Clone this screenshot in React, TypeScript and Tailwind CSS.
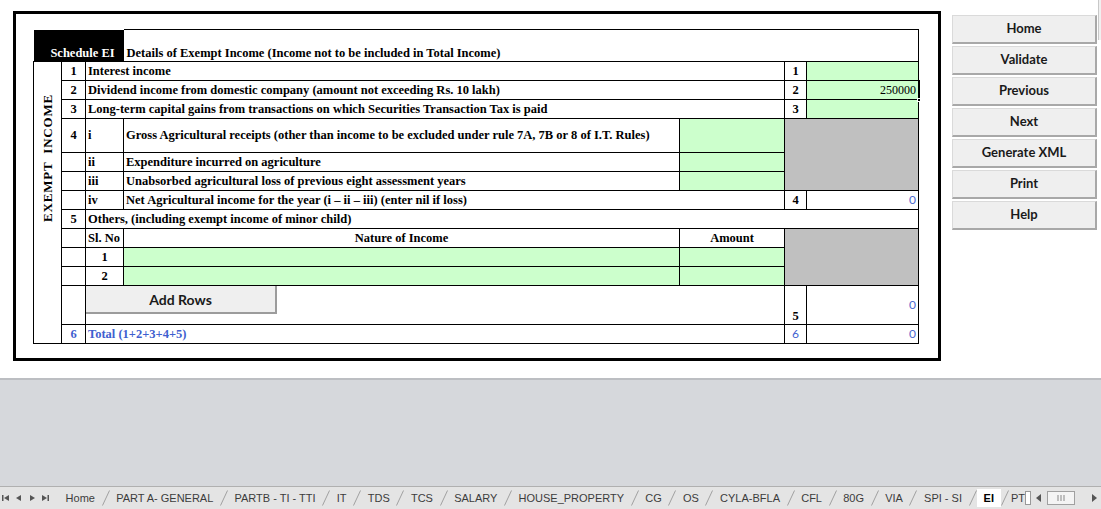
const sideButtons = ["Home", "Validate", "Previous", "Next", "Generate XML", "Print", "Help"];

const sheetTabs = [
  "Home",
  "PART A- GENERAL",
  "PARTB - TI - TTI",
  "IT",
  "TDS",
  "TCS",
  "SALARY",
  "HOUSE_PROPERTY",
  "CG",
  "OS",
  "CYLA-BFLA",
  "CFL",
  "80G",
  "VIA",
  "SPI - SI",
];

const cell = "border border-black px-[2px] py-0 leading-none";
const num = "border border-black p-0 text-center leading-none";
const green = "border border-black bg-[#ccffcc] p-0";
const gray = "border border-black bg-[#c0c0c0] p-0";
const blueZero = "border border-black p-0 pr-[2px] text-right font-['Lato',sans-serif] font-normal text-[12px] text-[#4b6bd0] leading-none";

const Slash = () => (
  <svg width="8" height="16" viewBox="0 0 8 16" className="shrink-0">
    <path d="M0.5 15.5 L7.5 0.5" stroke="#a0a0a0" strokeWidth="1" fill="none" />
  </svg>
);

const SheetNav = () => (
  <div className="flex items-center gap-[5px] pl-[2px] pr-[3px]">
    <svg width="8" height="8" viewBox="0 0 8 8">
      <rect x="0" y="1" width="1.5" height="6" fill="#555" />
      <path d="M7 1 L2 4 L7 7 Z" fill="#555" />
    </svg>
    <svg width="8" height="8" viewBox="0 0 8 8">
      <path d="M6 1 L1 4 L6 7 Z" fill="#555" />
    </svg>
    <svg width="8" height="8" viewBox="0 0 8 8">
      <path d="M2 1 L7 4 L2 7 Z" fill="#555" />
    </svg>
    <svg width="8" height="8" viewBox="0 0 8 8">
      <path d="M1 1 L6 4 L1 7 Z" fill="#555" />
      <rect x="6.5" y="1" width="1.5" height="6" fill="#555" />
    </svg>
  </div>
);

const ScheduleEI = () => (
  <table className="table-fixed border-collapse w-[885px] font-['Liberation_Serif',serif] font-bold text-[12.5px] text-black">
    <colgroup>
      <col className="w-[28px]" />
      <col className="w-[24px]" />
      <col className="w-[38px]" />
      <col className="w-[556px]" />
      <col className="w-[105px]" />
      <col className="w-[22px]" />
      <col className="w-[112px]" />
    </colgroup>
    <tbody>
      <tr className="h-[32px]">
        <td colSpan={3} className="bg-black text-white text-center align-bottom pb-[2px] pl-[8px] leading-none">
          Schedule EI
        </td>
        <td colSpan={4} className="border-t border-r border-b border-black align-bottom pb-[2px] px-[3px] leading-none">
          Details of Exempt Income (Income not to be included in Total Income)
        </td>
      </tr>
      <tr className="h-[19px]">
        <td rowSpan={13} className="border border-black p-0 align-top">
          <div className="h-[192px] flex items-center justify-center">
            <span className="[writing-mode:vertical-rl] rotate-180 whitespace-pre text-[13px] tracking-[0.8px]">EXEMPT  INCOME</span>
          </div>
        </td>
        <td className={num}>1</td>
        <td colSpan={3} className={cell}>Interest income</td>
        <td className={num}>1</td>
        <td className={green} />
      </tr>
      <tr className="h-[19px]">
        <td className={num}>2</td>
        <td colSpan={3} className={cell}>Dividend income from domestic company (amount not exceeding Rs. 10 lakh)</td>
        <td className={num}>2</td>
        <td className="border border-black bg-[#ccffcc] p-0 pr-[2px] text-right font-normal text-[12px] relative">
          250000
          <span className="absolute right-[-2px] top-[-1px] bottom-[-1px] w-[2px] bg-black" />
          <span className="absolute right-[-3px] bottom-[-3px] w-[4px] h-[4px] bg-black border border-white" />
        </td>
      </tr>
      <tr className="h-[19px]">
        <td className={num}>3</td>
        <td colSpan={3} className={cell}>Long-term capital gains from transactions on which Securities Transaction Tax is paid</td>
        <td className={num}>3</td>
        <td className={green} />
      </tr>
      <tr className="h-[34px]">
        <td className={num}>4</td>
        <td className={cell}>i</td>
        <td className={cell}>Gross Agricultural receipts (other than income to be excluded under rule 7A, 7B or 8 of I.T. Rules)</td>
        <td className={green} />
        <td colSpan={2} rowSpan={3} className={gray} />
      </tr>
      <tr className="h-[19px]">
        <td className={num} />
        <td className={cell}>ii</td>
        <td className={cell}>Expenditure incurred on agriculture</td>
        <td className={green} />
      </tr>
      <tr className="h-[19px]">
        <td className={num} />
        <td className={cell}>iii</td>
        <td className={cell}>Unabsorbed agricultural loss of previous eight assessment years</td>
        <td className={green} />
      </tr>
      <tr className="h-[19px]">
        <td className={num} />
        <td className={cell}>iv</td>
        <td colSpan={2} className={cell}>Net Agricultural income for the year (i – ii – iii) (enter nil if loss)</td>
        <td className={num}>4</td>
        <td className={blueZero}>0</td>
      </tr>
      <tr className="h-[19px]">
        <td className={num}>5</td>
        <td colSpan={5} className={cell}>Others, (including exempt income of minor child)</td>
      </tr>
      <tr className="h-[19px]">
        <td className={num} />
        <td className={cell}>Sl. No</td>
        <td className={`${cell} text-center`}>Nature of Income</td>
        <td className={`${cell} text-center`}>Amount</td>
        <td colSpan={2} rowSpan={3} className={gray} />
      </tr>
      <tr className="h-[19px]">
        <td className={num} />
        <td className={num}>1</td>
        <td className={green} />
        <td className={green} />
      </tr>
      <tr className="h-[19px]">
        <td className={num} />
        <td className={num}>2</td>
        <td className={green} />
        <td className={green} />
      </tr>
      <tr className="h-[39px]">
        <td className={num} />
        <td colSpan={3} className="border border-black p-0 align-top">
          <button className="-ml-px -mt-px w-[192px] h-[29px] bg-[#efefef] border border-[#d4d4d4] border-r-2 border-b-2 border-r-[#9c9c9c] border-b-[#9c9c9c] font-['Lato',sans-serif] font-bold text-[14px] text-[#1a1a1a] block">
            Add Rows
          </button>
        </td>
        <td className={`${num} align-bottom pb-[2px]`}>5</td>
        <td className={blueZero}>0</td>
      </tr>
      <tr className="h-[19px] text-[#3f5fcf]">
        <td className={num}>6</td>
        <td colSpan={3} className={cell}>Total (1+2+3+4+5)</td>
        <td className={`${num} font-['Lato',sans-serif] font-normal text-[12px]`}>6</td>
        <td className={blueZero}>0</td>
      </tr>
    </tbody>
  </table>
);

export default function App() {
  return (
    <div className="w-[1101px] h-[509px] flex flex-col bg-white overflow-hidden">
      <div className="h-[378px] flex shrink-0">
        <div className="ml-[13px] mt-[11px] w-[928px] h-[350px] border-[3px] border-black pl-[17px] pt-[15px]">
          <ScheduleEI />
        </div>
        <div className="ml-[11px] mt-[15px] w-[145px] flex flex-col gap-[2px]">
          {sideButtons.map((label) => (
            <button
              key={label}
              className="h-[29px] bg-[#efefef] border border-[#dadada] border-r-2 border-b-2 border-r-[#a8a8a8] border-b-[#a8a8a8] font-['Lato',sans-serif] font-bold text-[13px] text-[#1a1a1a]"
            >
              {label}
            </button>
          ))}
        </div>
        <div className="ml-auto w-[3px] h-[40px] border-l border-[#c8c8c8] bg-[#f0f0f0]" />
      </div>
      <div className="flex-1 bg-[#d6d8dc] border-t-2 border-[#bcbec2]" />
      <div className="h-[23px] shrink-0 bg-[#e4e4e4] border-t border-[#b0b0b0] flex items-center font-['Liberation_Sans',sans-serif] text-[11px] text-[#3c3c3c] leading-none">
        <SheetNav />
        <div className="w-px h-[16px] bg-[#a8a8a8]" />
        <div className="flex items-center pl-[7px]">
          {sheetTabs.map((t) => (
            <div key={t} className="flex items-center">
              <span className="px-[6.6px] whitespace-nowrap">{t}</span>
              <Slash />
            </div>
          ))}
          <span className="bg-white px-[7px] h-[18px] flex items-center font-bold text-black">EI</span>
          <Slash />
          <span className="pl-[2px] whitespace-nowrap">PT</span>
        </div>
        <div className="ml-auto flex items-center gap-[5px] pr-[2px] bg-[#e4e4e4]">
          <div className="w-[6px] h-[14px] border border-[#999] bg-white" />
          <svg width="6" height="8" viewBox="0 0 6 8">
            <path d="M5 0 L0 4 L5 8 Z" fill="#555" />
          </svg>
          <div className="w-[28px] h-[14px] border border-[#a0a0a0] bg-[#f4f4f4] flex items-center justify-center">
            <svg width="8" height="6" viewBox="0 0 8 6">
              <path d="M1 0 V6 M4 0 V6 M7 0 V6" stroke="#888" strokeWidth="1" />
            </svg>
          </div>
          <div className="w-[6px]" />
          <svg width="6" height="8" viewBox="0 0 6 8">
            <path d="M1 0 L6 4 L1 8 Z" fill="#555" />
          </svg>
          <div className="w-[6px] h-[14px] border border-[#999] bg-white" />
        </div>
      </div>
    </div>
  );
}
